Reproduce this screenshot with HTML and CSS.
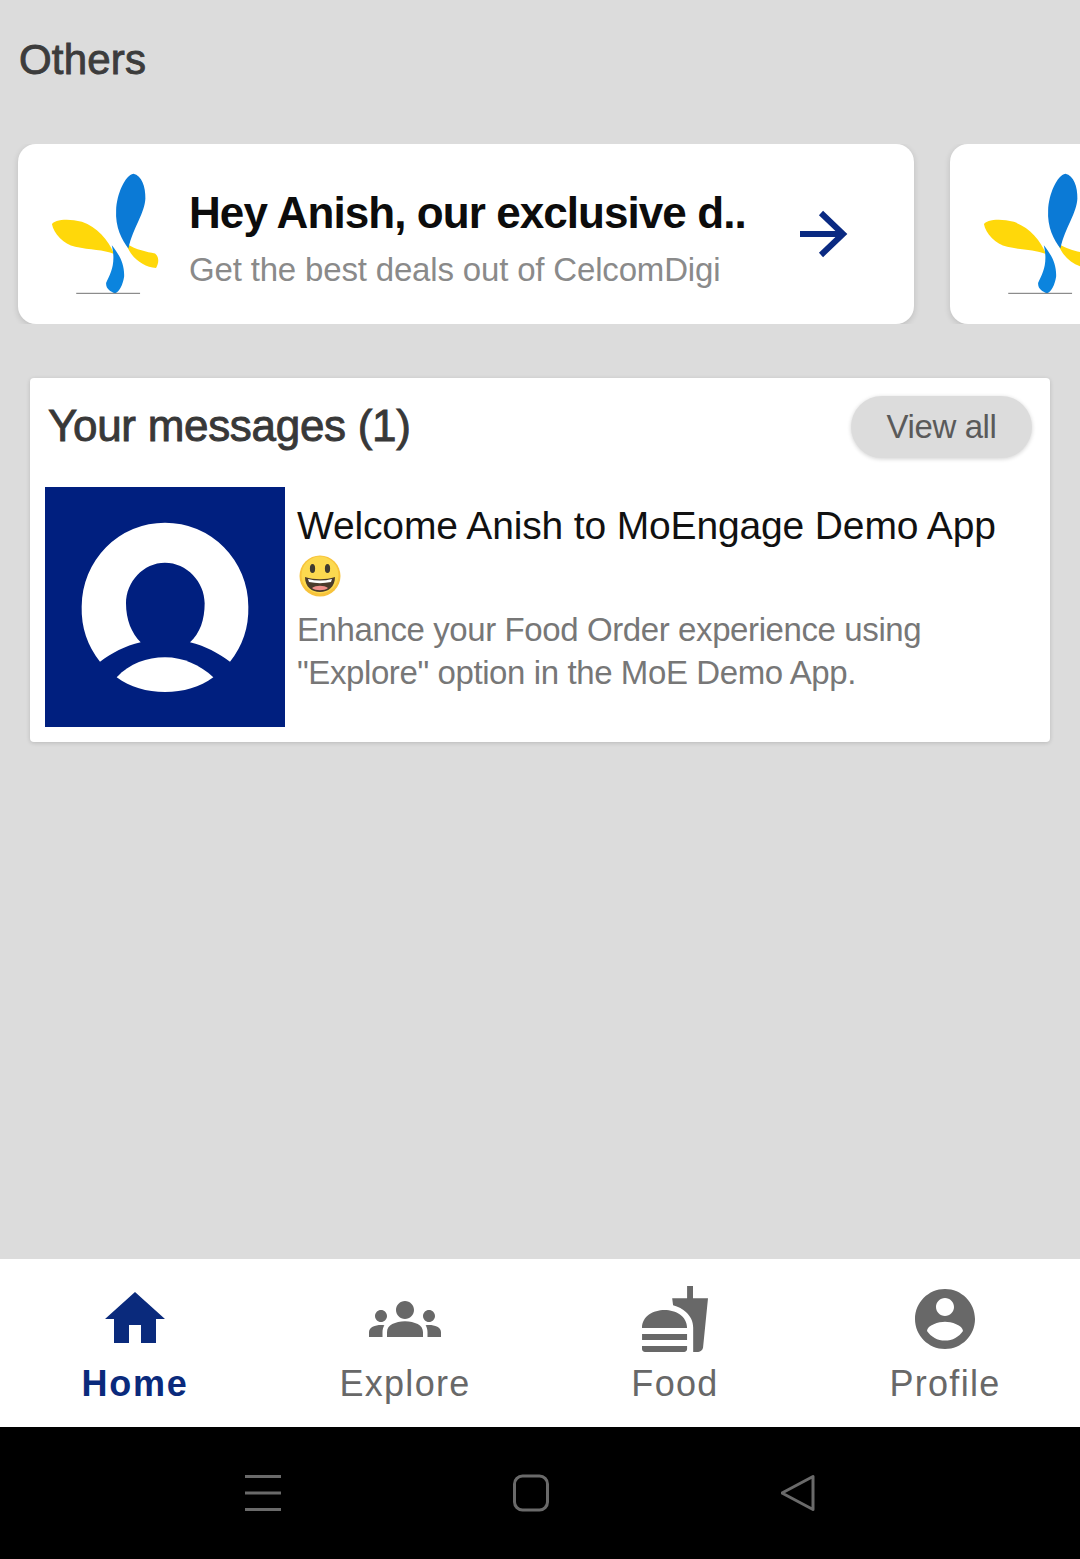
FILE: index.html
```html
<!DOCTYPE html>
<html lang="en">
<head>
<meta charset="utf-8">
<title>Others</title>
<link rel="stylesheet" href="styles.css">
</head>
<body>
<svg class="defs" width="0" height="0" aria-hidden="true">
  <symbol id="logo" viewBox="140 120 340 380">
    <path fill="#ffd80a" d="M155 282C160 270 200 262 245 275C290 290 325 330 342 372C310 358 270 360 225 350C190 342 160 310 155 282Z"/>
    <path fill="#ffd80a" d="M378 340C410 360 440 365 465 370C478 380 477 400 468 414C430 410 392 385 378 340Z"/>
    <path fill="#0b7ad6" d="M400 130C425 135 437 170 436 205C434 250 400 290 385 355C365 330 345 290 348 240C350 190 375 135 400 130Z"/>
    <path fill="#0b84de" d="M335 345C355 370 374 400 372 440C368 465 358 485 345 490C330 485 316 475 318 458C332 430 348 400 335 345Z"/>
    <path stroke="#555" stroke-width="2.5" d="M228 490H420"/>
  </symbol>
</svg>
<div class="screen">
  <main class="content">
    <h2 class="section-title">Others</h2>
    <div class="carousel">
      <article class="promo">
        <svg class="promo-logo"><use href="#logo"/></svg>
        <div class="promo-text">
          <div class="promo-title">Hey Anish, our exclusive d..</div>
          <div class="promo-sub">Get the best deals out of CelcomDigi</div>
        </div>
        <svg class="promo-arrow" viewBox="0 0 50 48" fill="none" stroke="#0a2a82" stroke-width="6"><path d="M0 24H43M21 3L43 24L21 45"/></svg>
      </article>
      <article class="promo">
        <svg class="promo-logo"><use href="#logo"/></svg>
      </article>
    </div>
    <section class="messages">
      <header class="messages-head">
        <h3 class="messages-title">Your messages (1)</h3>
        <button class="view-all">View all</button>
      </header>
      <div class="message">
        <svg class="avatar" viewBox="45 21 720 720">
          <rect x="45" y="21" width="720" height="720" fill="#001f7f"/>
          <path fill="#fff" d="M210 545A256 256 0 0 1 155 380A250 252 0 0 1 655 380A256 256 0 0 1 600 545C565 520 525 497 480 487C510 460 524 420 524 370C524 305 470 248 405 248C340 248 288 305 288 370C288 420 305 460 332 487C285 497 245 520 210 545Z"/>
          <path fill="#fff" d="M260 592C300 550 350 532 405 532C460 532 510 555 550 592C510 622 460 636 405 636C350 636 300 622 260 592Z"/>
        </svg>
        <div class="message-body">
          <div class="message-title">Welcome Anish to MoEngage Demo App</div>
          <svg class="emoji" viewBox="0 0 44 44" role="img" aria-label="smiling face">
            <circle cx="22" cy="22" r="20.5" fill="#f7c33c"/>
            <circle cx="22" cy="21" r="18.5" fill="#fcd94f"/>
            <ellipse cx="14.5" cy="14.5" rx="2.6" ry="4.6" fill="#3f3a30"/>
            <ellipse cx="29.5" cy="14.5" rx="2.6" ry="4.6" fill="#3f3a30"/>
            <path fill="#4a3b2c" d="M7 23C16 26 28 26 37 23C37 33 30 38 22 38C14 38 7 33 7 23Z"/>
            <path fill="#fff" d="M10 25C18 27 26 27 34 25L33 28C26 29.500 18 29.500 11 28Z"/>
            <path fill="#ef8f8a" d="M14 34C18 31 26 31 30 34C27 37 17 37 14 34Z"/>
          </svg>
          <p class="message-desc">Enhance your Food Order experience using "Explore" option in the MoE Demo App.</p>
        </div>
      </div>
    </section>
  </main>
  <nav class="tabs">
    <a class="tab tab-active">
      <svg class="tab-icon" viewBox="0 0 24 24"><path d="M10 20v-6h4v6h5v-8h3L12 3 2 12h3v8z"/></svg>
      <span class="tab-label">Home</span>
    </a>
    <a class="tab">
      <svg class="tab-icon" viewBox="0 0 24 24"><path d="M12 12.750c1.630 0 3.070.39 4.240.9 1.080.48 1.760 1.560 1.760 2.730V18H6v-1.610c0-1.180.68-2.260 1.760-2.730 1.170-.52 2.610-.91 4.240-.91zM4 13c1.100 0 2-.9 2-2s-.9-2-2-2-2 .9-2 2 .9 2 2 2zm1.130 1.100c-.37-.06-.74-.1-1.130-.1-.99 0-1.930.21-2.780.58C.48 14.900 0 15.620 0 16.430V18h4.500v-1.610c0-.83.23-1.610.63-2.290zM20 13c1.100 0 2-.9 2-2s-.9-2-2-2-2 .9-2 2 .9 2 2 2zm4 3.430c0-.81-.48-1.530-1.220-1.850-.85-.37-1.790-.58-2.780-.58-.39 0-.76.04-1.130.1.4.68.63 1.460.63 2.290V18H24v-1.570zM12 6c1.660 0 3 1.340 3 3s-1.340 3-3 3-3-1.340-3-3 1.340-3 3-3z"/></svg>
      <span class="tab-label">Explore</span>
    </a>
    <a class="tab">
      <svg class="tab-icon" viewBox="0 0 24 24"><path d="M18.060 22.990h1.660c.84 0 1.530-.64 1.630-1.460L23 5.050h-5V1h-1.970v4.050h-4.970l.3 2.340c1.710.47 3.310 1.320 4.270 2.260 1.440 1.420 2.430 2.890 2.430 5.290v8.050zM1 21.990V21h15.030v.99c0 .55-.45 1-1.010 1H2.010c-.56 0-1.010-.45-1.010-1zm15.030-7c0-8-15.030-8-15.030 0h15.030zM1.020 17h15v2h-15z"/></svg>
      <span class="tab-label">Food</span>
    </a>
    <a class="tab">
      <svg class="tab-icon" viewBox="0 0 24 24"><path d="M12 2C6.480 2 2 6.480 2 12s4.480 10 10 10 10-4.480 10-10S17.520 2 12 2zm0 3c1.660 0 3 1.340 3 3s-1.340 3-3 3-3-1.340-3-3 1.340-3 3-3zm0 14.200c-2.500 0-4.710-1.280-6-3.220.03-1.990 4-3.080 6-3.080 1.990 0 5.970 1.090 6 3.080-1.290 1.940-3.500 3.220-6 3.220z"/></svg>
      <span class="tab-label">Profile</span>
    </a>
  </nav>
  <div class="system-bar">
    <svg class="sys-icon" viewBox="0 0 36 38" fill="none" stroke="#6a6a6a" stroke-width="3"><path d="M0 2.500H36M0 19H36M0 35.500H36"/></svg>
    <svg class="sys-icon" viewBox="0 0 36 38" fill="none" stroke="#6a6a6a" stroke-width="3"><rect x="1.500" y="2" width="33" height="34" rx="8"/></svg>
    <svg class="sys-icon" viewBox="0 0 36 38" fill="none" stroke="#6a6a6a" stroke-width="3" stroke-linejoin="round"><path d="M32 2.500V35.500L1 19Z"/></svg>
  </div>
</div>
</body>
</html>
```
FILE: styles.css
```css
* { box-sizing: border-box; }
html, body { margin: 0; padding: 0; }
body { font-family: "Liberation Sans", Arial, sans-serif; background: #000; }
.defs { position: absolute; }
.screen { width: 1080px; height: 1559px; display: flex; flex-direction: column; overflow: hidden; }
.content { height: 1259px; background: #dcdcdc; display: flex; flex-direction: column; }
.section-title { margin: 0; padding: 35px 0 0 19px; height: 144px; font-size: 42px; line-height: 49px; font-weight: 400; letter-spacing: .2px; -webkit-text-stroke: .9px #3c3c3c; color: #3c3c3c; }
.carousel { display: flex; gap: 36px; padding-left: 18px; height: 180px; overflow: hidden; flex: none; margin-bottom: 54px; }
.promo { flex: none; width: 896px; height: 180px; background: #fff; border-radius: 18px; display: flex; align-items: center; padding-left: 29px; box-shadow: 0 2px 6px rgba(0,0,0,.14); }
.promo-logo { width: 113px; height: 127px; flex: none; margin-top: -1px; }
.promo-text { margin: 8px 0 0 29px; width: 611px; flex: none; }
.promo-title { font-size: 44px; line-height: 54px; font-weight: 700; letter-spacing: -.93px; color: #0c0c0c; white-space: nowrap; }
.promo-sub { font-size: 33px; line-height: 40px; margin-top: 10px; letter-spacing: -.17px; color: #8a8a8a; white-space: nowrap; }
.promo-arrow { width: 50px; height: 48px; flex: none; }
.messages { margin-left: 30px; width: 1020px; height: 364px; background: #fff; border-radius: 4px; box-shadow: 0 1px 4px rgba(0,0,0,.16); padding: 18px 18px 0 15px; }
.messages-head { display: flex; justify-content: space-between; align-items: center; height: 62px; margin-bottom: 29px; padding-left: 3px; }
.messages-title { margin: -2px 0 0; font-size: 44px; font-weight: 400; letter-spacing: -.3px; -webkit-text-stroke: .9px #383838; color: #383838; }
.view-all { width: 181px; height: 62px; border: 0; border-radius: 31px; background: #dcdcdc; color: #5a5a5a; font: 400 33px "Liberation Sans", Arial, sans-serif; letter-spacing: -.4px; box-shadow: 0 1px 4px rgba(0,0,0,.18); padding: 0; }
.message { display: flex; gap: 12px; }
.avatar { width: 240px; height: 240px; flex: none; display: block; }
.message-body { flex: 1; padding-top: 14px; }
.message-title { font-size: 39px; line-height: 50px; letter-spacing: -.15px; color: #111; white-space: nowrap; }
.emoji { display: block; width: 44px; height: 44px; margin: 3px 0 0 1px; }
.message-desc { margin: 10px 0 0; font-size: 33px; line-height: 43px; letter-spacing: -.4px; color: #777; width: 680px; }
.tabs { height: 168px; background: #fff; display: grid; grid-template-columns: repeat(4, 1fr); }
.tab { display: flex; flex-direction: column; align-items: center; padding-top: 24px; color: #686868; }
.tab-icon { width: 72px; height: 72px; fill: currentColor; display: block; }
.tab-label { font-size: 36px; line-height: 42px; margin-top: 8px; letter-spacing: 1.3px; }
.tab-active { color: #0a2a7c; }
.tab-active .tab-label { font-weight: 700; letter-spacing: 1.7px; }
.system-bar { height: 132px; background: #000; display: flex; justify-content: center; align-items: center; gap: 232px; padding-right: 18px; }
.sys-icon { width: 36px; height: 38px; flex: none; }
```
